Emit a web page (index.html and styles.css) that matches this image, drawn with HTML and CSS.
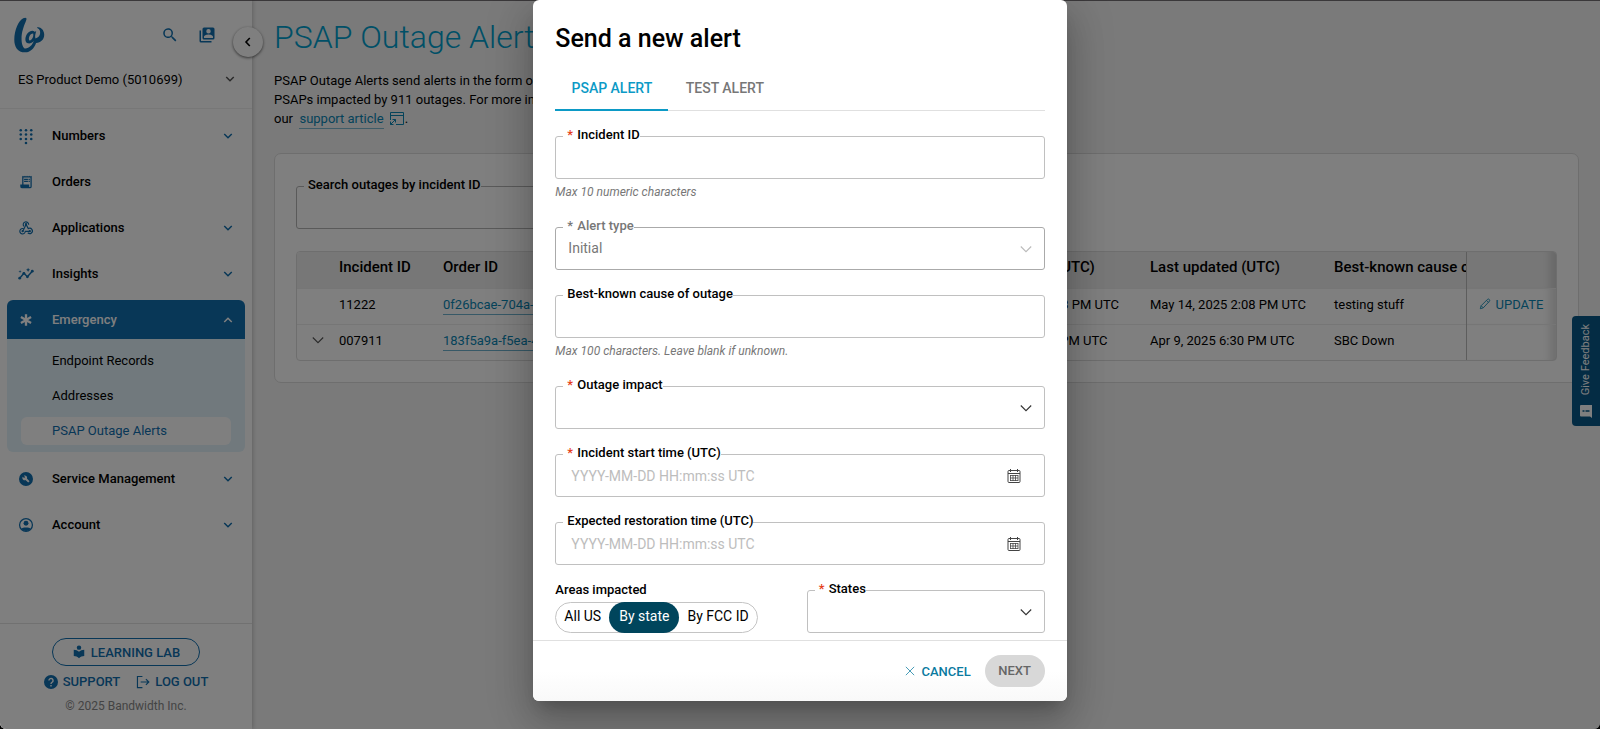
FILE: index.html
```html
<!DOCTYPE html>
<html lang="en">
<head>
<meta charset="utf-8">
<title>PSAP Outage Alerts</title>
<link rel="stylesheet" href="styles.css">
</head>
<body>
<svg class="sprite" aria-hidden="true">
  <symbol id="chevron" viewBox="0 0 12 12"><path d="M1.500 3.500 6 8l4.500-4.500" fill="none" stroke="currentColor" stroke-width="1.800"/></symbol>
  <symbol id="chevron-thin" viewBox="0 0 12 12"><path d="M.8 3.500 6 8.700l5.200-5.200" fill="none" stroke="currentColor" stroke-width="1.100"/></symbol>
  <symbol id="calendar" viewBox="0 0 16 16"><g fill="none" stroke="currentColor"><rect x="2" y="2.500" width="12" height="12" rx="1"/><path d="M2 5.500h12M4.500 1v3M11.500 1v3"/><path d="M4 7.500h8M4 10h8M4 12.500h8M4.500 7v6M7 7v6M9.500 7v6M12 7v6" stroke-width=".8"/></g></symbol>
</svg>
<div class="app">
  <aside class="sidebar">
    <div class="brand">
      <svg class="logo" viewBox="0 0 32 38" aria-label="Bandwidth"><path d="M9.500 1.300c2.500-1.300 4-.4 3.200 1.800C10.500 9 7.600 15 7.800 23c.1 5 1.700 9.400 4 9.400 3.700 0 7.600-4 8.600-8-1.400 2.200-4 3.300-6.200 2.700-3.500-1-2.900-6.900-.2-10.300 2.200-2.800 5.700-3.500 7.200-1.700l1.700-.6c-1 3.200-1.500 5.400-.7 7.600 3-.9 5.300-3.200 4.700-7.200-.3-2-1.400-3.200-3.300-4 2.600-1.500 7.600 1.600 7.600 7.400 0 5-3.700 8.200-8.400 8.400-2 5.800-6.500 9.900-11.200 9.700C3.700 36.500.2 30.500.3 23 .4 13.700 4.600 3.800 9.500 1.300zM19.800 17c-2.300-.3-4.700 3-4.400 5.800.2 1.800 1.800 1.600 3.100-.2 1.200-1.600 1.800-3.300 1.300-5.600z" fill="currentColor"/></svg>
      <button class="icon-btn" aria-label="Search"><svg viewBox="0 0 24 24"><path fill="currentColor" d="M15.500 14h-.8l-.3-.3A6.500 6.500 0 1 0 13.700 14.400l.3.3v.8l5 5 1.500-1.500zm-6 0a4.500 4.500 0 1 1 0-9 4.500 4.500 0 0 1 0 9z"/></svg></button>
      <button class="icon-btn" aria-label="Contacts"><svg viewBox="0 0 24 24"><path fill="currentColor" d="M4 6H2v14a2 2 0 0 0 2 2h14v-2H4zm16-4H8a2 2 0 0 0-2 2v12c0 1.100.9 2 2 2h12a2 2 0 0 0 2-2V4a2 2 0 0 0-2-2zm-6 2a3 3 0 1 1 0 6 3 3 0 0 1 0-6zm6 12H8v-1.500c0-2 4-3.100 6-3.100s6 1.100 6 3.100z"/></svg></button>
    </div>
    <button class="collapse" aria-label="Collapse menu"><svg viewBox="0 0 12 12"><path d="M7.800 2 4 6l3.800 4" fill="none" stroke="currentColor" stroke-width="1.600"/></svg></button>
    <button class="account"><span>ES Product Demo (5010699)</span><svg class="chev"><use href="#chevron"/></svg></button>
    <nav class="nav">
      <a class="nav-item" href="#numbers"><svg viewBox="0 0 24 24"><g fill="currentColor"><circle cx="3" cy="2" r="2.200"/><circle cx="12" cy="2" r="2.200"/><circle cx="21" cy="2" r="2.200"/><circle cx="3" cy="9.500" r="2.200"/><circle cx="12" cy="9.500" r="2.200"/><circle cx="21" cy="9.500" r="2.200"/><circle cx="3" cy="17" r="2.200"/><circle cx="12" cy="17" r="2.200"/><circle cx="21" cy="17" r="2.200"/><circle cx="12" cy="24" r="2.200"/></g></svg><span>Numbers</span><svg class="chev"><use href="#chevron"/></svg></a>
      <a class="nav-item" href="#orders"><svg viewBox="1 1 22 22"><path fill="currentColor" d="M19.500 3.500 18 2l-1.500 1.500L15 2l-1.500 1.500L12 2l-1.500 1.500L9 2 7.500 3.500 6 2v14H3v3a3 3 0 0 0 3 3h12a3 3 0 0 0 3-3V2zM19 19a1 1 0 0 1-2 0v-3H8V5h11z"/><path fill="currentColor" d="M9 7h6v2H9zM16 7h2v2h-2zM9 10h6v2H9zM16 10h2v2h-2z"/></svg><span>Orders</span></a>
      <a class="nav-item" href="#applications"><svg viewBox="1 1 22 22"><g fill="none" stroke="currentColor" stroke-width="1.800"><path d="M8.600 9.500A4.300 4.300 0 1 1 16.200 7M12 6l3.600 7a4.200 4.200 0 1 1-.8 6.500M8.500 13.200a4.300 4.300 0 1 0 2.400 4H18"/><path d="M12 6.500 7 17"/></g><circle cx="12" cy="6" r="1.800" fill="currentColor"/><circle cx="6.700" cy="17" r="1.800" fill="currentColor"/><circle cx="18" cy="17" r="1.800" fill="currentColor"/></svg><span>Applications</span><svg class="chev"><use href="#chevron"/></svg></a>
      <a class="nav-item" href="#insights"><svg viewBox="2 2 20 20"><path fill="none" stroke="currentColor" stroke-width="2" d="m3 18 6-7 5 5 7-8"/><g fill="currentColor"><circle cx="3" cy="18" r="2"/><circle cx="9" cy="11" r="2"/><circle cx="14" cy="16" r="2"/><circle cx="21" cy="8" r="2"/><path d="m15 9 .9-2.100L18 6l-2.100-.9L15 3l-.9 2.100L12 6l2.100.9zM3.500 11 4 9l2-.5L4 8l-.5-2L3 8l-2 .5L3 9z"/></g></svg><span>Insights</span><svg class="chev"><use href="#chevron"/></svg></a>
      <div class="nav-group">
        <a class="nav-item active" href="#emergency"><svg viewBox="0 0 24 24"><path stroke="currentColor" stroke-width="4" d="M12 2v20M3.300 7l17.400 10M20.700 7 3.300 17"/></svg><span>Emergency</span><svg class="chev up"><use href="#chevron"/></svg></a>
        <div class="subnav">
          <a href="#endpoint-records">Endpoint Records</a>
          <a href="#addresses">Addresses</a>
          <a href="#psap" class="current">PSAP Outage Alerts</a>
        </div>
      </div>
      <a class="nav-item" href="#service"><svg viewBox="0 0 24 24"><path fill="currentColor" fill-rule="evenodd" d="M12 0a12 12 0 1 0 0 24 12 12 0 0 0 0-24zM8.200 6.300 10.500 8.600 8.700 10.400 6.300 8c-1 2-.5 4 .9 5.100 1.200 1 2.600 1.100 3.900.6l4.700 4.500 2.300-2.300-4.500-4.700c.6-1.300.3-2.900-.7-4-1.200-1.300-3-1.700-4.700-.9z"/></svg><span>Service Management</span><svg class="chev"><use href="#chevron"/></svg></a>
      <a class="nav-item" href="#account"><svg viewBox="0 0 24 24"><circle cx="12" cy="12" r="11" fill="none" stroke="currentColor" stroke-width="2.200"/><circle cx="12" cy="9" r="4.200" fill="currentColor"/><path fill="currentColor" d="M4 18.500c2-3 14-3 16 0-3.500 5-12.500 5-16 0z"/></svg><span>Account</span><svg class="chev"><use href="#chevron"/></svg></a>
    </nav>
    <footer class="side-foot">
      <a class="pill" href="#lab"><svg viewBox="0 0 24 24"><path fill="currentColor" d="M12 11.500C9.600 9.400 6.500 8 3 8v11c3.500 0 6.600 1.400 9 3.500 2.400-2.100 5.500-3.500 9-3.500V8c-3.500 0-6.600 1.400-9 3.500z"/><circle cx="12" cy="4.500" r="3.800" fill="currentColor"/></svg>LEARNING LAB</a>
      <div class="foot-links">
        <a href="#support"><svg viewBox="0 0 24 24"><circle cx="12" cy="12" r="12" fill="currentColor"/><path d="M8.500 9.500a3.500 3.500 0 1 1 5.400 2.900c-1.300.9-1.900 1.400-1.900 3M12 17v2.500" fill="none" stroke="#fff" stroke-width="2.400"/></svg>SUPPORT</a>
        <a href="#logout"><svg viewBox="0 0 24 24"><path d="M11 2.500H2.500v19H11M8 12h14M17 7l5 5-5 5" fill="none" stroke="currentColor" stroke-width="2"/></svg>LOG OUT</a>
      </div>
      <small>© 2025 Bandwidth Inc.</small>
    </footer>
  </aside>

  <main class="main">
    <h1>PSAP Outage Alerts</h1>
    <p class="intro">PSAP Outage Alerts send alerts in the form of<br>PSAPs impacted by 911 outages. For more info<br>our &nbsp;<a href="#article">support article</a> <svg viewBox="0 0 16 14"><g fill="none" stroke="currentColor"><path d="M1.500 8V.5h13v12H7M1.500 3.500h13M1.500 12.500l5-5M3.500 7.500h3v3M1.500 9.500v3h3"/></g></svg>.</p>
    <section class="card">
      <div class="field search">
        <label for="search">Search outages by incident ID</label>
        <input id="search" type="text">
      </div>
      <div class="table-wrap">
        <table>
          <colgroup><col class="c-exp"><col class="c-inc"><col><col class="c-date"><col class="c-upd"><col class="c-cause"><col class="c-act"></colgroup>
          <thead><tr><th></th><th>Incident ID</th><th>Order ID</th><th>Incident start (UTC)</th><th>Last updated (UTC)</th><th>Best-known cause of outage</th><th class="act"></th></tr></thead>
          <tbody>
            <tr><td></td><td>11222</td><td><a href="#o1">0f26bcae-704a-4</a></td><td>May 14, 2025 1:53 PM UTC</td><td>May 14, 2025 2:08 PM UTC</td><td>testing stuff</td><td class="act"><button class="update"><svg viewBox="0 0 14 14"><path d="m1.500 12.500 1-3.500 7.500-7.500q1-.8 2 .2t.2 2L5 11.500zM8.800 2.800l2.400 2.400M2.500 9l2.500 2.500" fill="none" stroke="currentColor"/></svg>UPDATE</button></td></tr>
            <tr><td class="exp"><button aria-label="Expand row"><svg><use href="#chevron-thin"/></svg></button></td><td>007911</td><td><a href="#o2">183f5a9a-f5ea-4</a></td><td>Apr 9, 2025 6:15 PM UTC</td><td>Apr 9, 2025 6:30 PM UTC</td><td>SBC Down</td><td class="act"></td></tr>
          </tbody>
        </table>
      </div>
    </section>
  </main>

  <button class="feedback"><svg viewBox="0 0 14 14"><path fill="currentColor" d="M2 1h11v13l-2-1.500H2q-1 0-1-1V2q0-1 1-1z"/><path d="M3.500 7h2M6.500 7h4" stroke="#085888" stroke-width="1.500"/></svg><span>Give Feedback</span></button>

  <div class="scrim"></div>

  <form class="modal" role="dialog" aria-labelledby="modal-title">
    <div class="modal-body">
      <h2 id="modal-title">Send a new alert</h2>
      <div class="tabs" role="tablist">
        <button type="button" role="tab" aria-selected="true" class="tab on">PSAP ALERT</button>
        <button type="button" role="tab" aria-selected="false" class="tab">TEST ALERT</button>
      </div>
      <div class="row">
        <div class="field"><label for="incident"><i>*</i>Incident ID</label><input id="incident" type="text"></div>
        <p class="hint">Max 10 numeric characters</p>
      </div>
      <div class="row">
        <div class="field disabled"><label for="type"><i>*</i>Alert type</label><select id="type" disabled><option>Initial</option></select><svg class="arrow"><use href="#chevron-thin"/></svg></div>
      </div>
      <div class="row">
        <div class="field"><label for="cause">Best-known cause of outage</label><input id="cause" type="text"></div>
        <p class="hint">Max 100 characters. Leave blank if unknown.</p>
      </div>
      <div class="row">
        <div class="field"><label for="impact"><i>*</i>Outage impact</label><select id="impact"><option></option></select><svg class="arrow"><use href="#chevron-thin"/></svg></div>
      </div>
      <div class="row">
        <div class="field"><label for="start"><i>*</i>Incident start time (UTC)</label><input id="start" type="text" placeholder="YYYY-MM-DD HH:mm:ss UTC"><button type="button" class="cal" aria-label="Pick start time"><svg><use href="#calendar"/></svg></button></div>
      </div>
      <div class="row">
        <div class="field"><label for="end">Expected restoration time (UTC)</label><input id="end" type="text" placeholder="YYYY-MM-DD HH:mm:ss UTC"><button type="button" class="cal" aria-label="Pick restoration time"><svg><use href="#calendar"/></svg></button></div>
      </div>
      <div class="areas">
        <fieldset>
          <legend>Areas impacted</legend>
          <div class="segments">
            <label><input type="radio" name="area"><span>All US</span></label>
            <label><input type="radio" name="area" checked><span>By state</span></label>
            <label><input type="radio" name="area"><span>By FCC ID</span></label>
          </div>
        </fieldset>
        <div class="field"><label for="states"><i>*</i>States</label><select id="states"><option></option></select><svg class="arrow"><use href="#chevron-thin"/></svg></div>
      </div>
    </div>
    <div class="modal-foot">
      <button type="button" class="cancel"><svg viewBox="0 0 12 12"><path d="m1 1 10 10M11 1 1 11" stroke="currentColor" stroke-width=".9"/></svg>CANCEL</button>
      <button type="button" class="next" disabled>NEXT</button>
    </div>
  </form>
</div>
</body>
</html>
```
FILE: styles.css
```css
* { box-sizing: border-box; }
body { margin: 0; background: #000; color: #000; font: 13px/19px Roboto, "Liberation Sans", sans-serif; }
button, input, select { font: inherit; color: inherit; background: none; border: 0; padding: 0; margin: 0; }
a { color: inherit; text-decoration: none; }
h1, h2, p { margin: 0; }
.sprite { display: none; }

.app { position: relative; display: grid; grid-template-columns: 252px 1fr; height: 100vh; overflow: hidden; background: #f4f4f4; border-radius: 0 0 6px 6px; }
.scrim { position: absolute; inset: 0; background: rgba(0, 0, 0, .5); z-index: 2; }

/* Sidebar */
.sidebar { position: relative; z-index: 1; display: flex; flex-direction: column; background: #fff; border-top: 1px solid #757075; box-shadow: 1px 0 4px rgba(0, 0, 0, .2); color: #106eae; }
.brand { display: flex; align-items: center; gap: 19px; padding: 15px 36px 0 14px; height: 53px; }
.logo { width: 31px; height: 37px; margin-right: auto; }
.icon-btn { width: 18px; height: 18px; }
.icon-btn svg { display: block; width: 18px; height: 18px; }
.collapse { position: absolute; top: 26px; right: -11px; width: 30px; height: 30px; border-radius: 50%; background: #fff; color: #000; box-shadow: 0 1px 3px rgba(0, 0, 0, .6); display: grid; place-items: center; }
.collapse svg { width: 12px; height: 12px; }
.account { display: flex; align-items: center; justify-content: space-between; height: 55px; padding: 0 17px 4px 18px; border-bottom: 1px solid #eee; color: #000; }
.account .chev { color: #555; }
.chev { width: 10px; height: 10px; }
.up { transform: rotate(180deg); }
.nav { display: flex; flex-direction: column; gap: 7px; padding: 7px 7px 0; flex: 1; }
.nav-item { display: flex; align-items: center; height: 39px; padding: 0 12px; font-weight: 500; }
.nav-item svg { flex: none; }
.nav-item > svg:first-child { width: 14px; height: 14px; margin-right: 19px; overflow: visible; }
.nav-item span { flex: 1; color: #000; }
.active { background: #106eae; color: #fff; border-radius: 6px 6px 0 0; }
.nav-item.active span { color: #fff; }
.subnav { display: flex; flex-direction: column; gap: 7px; padding: 8px 14px 7px; background: #e2f3fa; border-radius: 0 0 6px 6px; color: #000; }
.subnav a { height: 28px; line-height: 28px; padding-left: 31px; border-radius: 6px; }
.subnav .current { background: #fff; color: #106eae; }
.side-foot { display: flex; flex-direction: column; align-items: center; border-top: 1px solid #e2e2e2; padding: 14px 0 13px; }
.side-foot a { display: flex; align-items: center; gap: 5px; }
.side-foot svg { width: 14px; height: 14px; }
.pill { height: 28px; padding: 0 19px; border: 1px solid #106eae; border-radius: 14px; font-weight: 500; }
.foot-links { display: flex; gap: 16px; padding: 6px 0; font-weight: 500; }
.side-foot small { font-size: 12px; color: #888; }

/* Page */
.main { min-width: 0; padding: 16px 21px 0 22px; border-top: 1px solid #757075; }
h1 { font-size: 32px; line-height: 40px; font-weight: 300; color: #00a0cf; }
.intro { padding-top: 14px; }
.intro a { color: #0a86b4; border-bottom: 1px solid #7fb8d0; padding-bottom: 2px; }
.intro svg { width: 16px; height: 14px; color: #0a86b4; vertical-align: -3px; margin-left: 2px; }
.card { margin-top: 25px; padding: 32px 21px 21px; background: #fff; border: 1px solid #ddd; border-radius: 7px; }
.field { position: relative; display: flex; align-items: center; height: 43px; border: 1px solid #c0c0c0; border-radius: 3px; }
.field label { position: absolute; left: 7px; top: -10px; height: 16px; line-height: 16px; padding-left: 4px; font-weight: 500; background: #fff; }
.field label i { display: inline-block; width: 10px; font-style: normal; color: #e53e1a; }
.field input, .field select { flex: 1; min-width: 0; height: 100%; padding: 0 15px; outline: 0; appearance: none; font-size: 14px; }
.field select { padding-left: 12px; }
.search { width: 500px; border-color: #b5b5b5; }
.table-wrap { margin-top: 22px; border: 1px solid #ddd; border-radius: 4px; overflow: hidden; }
table { width: 100%; table-layout: fixed; border-collapse: collapse; }
.c-exp { width: 30px; }
.c-inc { width: 104px; }
.c-date { width: 187px; }
.c-upd { width: 184px; }
.c-cause { width: 144px; }
.c-act { width: 90px; }
th, td { height: 36px; padding: 0 0 4px 12px; text-align: left; white-space: nowrap; overflow: hidden; }
th { font-size: 15px; font-weight: 500; background: #efefef; }
td { border-top: 1px solid #ececec; }
td a { color: #0a86b4; border-bottom: 1px solid #6fb2cf; padding-bottom: 2px; }
.exp { padding-left: 15px; }
.exp button, .exp svg { display: block; width: 12px; height: 12px; color: #555; }
.act { border-left: 1px solid #bbb; box-shadow: inset -12px 0 8px -6px rgba(0, 0, 0, .13); }
.update { display: flex; align-items: center; gap: 5px; color: #0a86b4; }
.update svg { width: 12px; height: 12px; }

.feedback { position: absolute; right: 0; top: 316px; display: flex; flex-direction: column-reverse; align-items: center; justify-content: space-between; width: 28px; height: 110px; padding: 8px 0; background: #085888; color: #fff; border-radius: 4px 0 0 4px; font-size: 11px; line-height: 14px; }
.feedback { flex-direction: column-reverse; }
.feedback span { writing-mode: vertical-rl; transform: rotate(180deg); }
.feedback svg { width: 14px; height: 14px; }

/* Dialog */
.modal { position: absolute; z-index: 3; top: 0; left: 0; right: 0; margin: 0 auto; width: 33.333%; background: #fff; border-radius: 6px; box-shadow: 0 11px 15px -7px rgba(0, 0, 0, .2), 0 24px 38px 3px rgba(0, 0, 0, .14), 0 9px 46px 8px rgba(0, 0, 0, .12); }
.modal-body { padding: 22px 22px 7px; }
h2 { font-size: 25px; line-height: 34px; font-weight: 500; }
.tabs { display: flex; margin: 9px 0 25px; height: 46px; border-bottom: 1px solid #e0e0e0; }
.tab { height: 46px; padding: 0 14px; min-width: 113px; font-size: 14px; font-weight: 500; color: #777; }
.tab.on { color: #0c9ac6; border-bottom: 2px solid #0c9ac6; padding-top: 2px; }
.row { margin-bottom: 25px; }
.hint { padding: 4px 0 0; height: 23px; font-style: italic; color: #777; font-size: 12px; line-height: 18px; }
.disabled { border-color: #aaa; }
.field.disabled label, .field.disabled i, .disabled select { color: #777; opacity: 1; }
.disabled .arrow { color: #bbb; }
.arrow { position: absolute; right: 12px; top: 15px; width: 12px; height: 12px; pointer-events: none; color: #333; }
::placeholder { color: #bdbdbd; opacity: 1; }
.cal { padding-right: 22px; height: 16px; color: #444; }
.cal svg { display: block; width: 16px; height: 16px; }
.areas { display: grid; grid-template-columns: 1fr 238px; align-items: end; margin-top: -10px; }
fieldset { border: 0; margin: 0; padding: 0; }
legend { padding: 0; height: 22px; font-weight: 500; }
.segments { display: inline-flex; height: 31px; border: 1px solid #c4c4c4; border-radius: 16px; vertical-align: top; }
.segments label { position: relative; }
.segments input { position: absolute; inset: 0; appearance: none; }
.segments span { display: block; height: 31px; margin-top: -1px; padding: 0 8px; line-height: 28px; font-size: 14px; border-radius: 16px; }
.segments :checked + span { position: relative; background: #00455c; color: #fff; padding: 0 10px; }
.modal-foot { display: flex; justify-content: flex-end; align-items: center; gap: 14px; height: 61px; padding: 0 22px; border-top: 1px solid #e0e0e0; border-radius: 0 0 6px 6px; background: linear-gradient(#fff 50%, #f9f9f9); }
.cancel { display: flex; align-items: center; gap: 6px; color: #0a7a9f; font-weight: 500; }
.cancel svg { width: 10px; height: 10px; }
.next { height: 32px; padding: 0 12px 2px; border-radius: 16px; background: #d8d8d8; color: #666; font-weight: 500; min-width: 60px; }
```
